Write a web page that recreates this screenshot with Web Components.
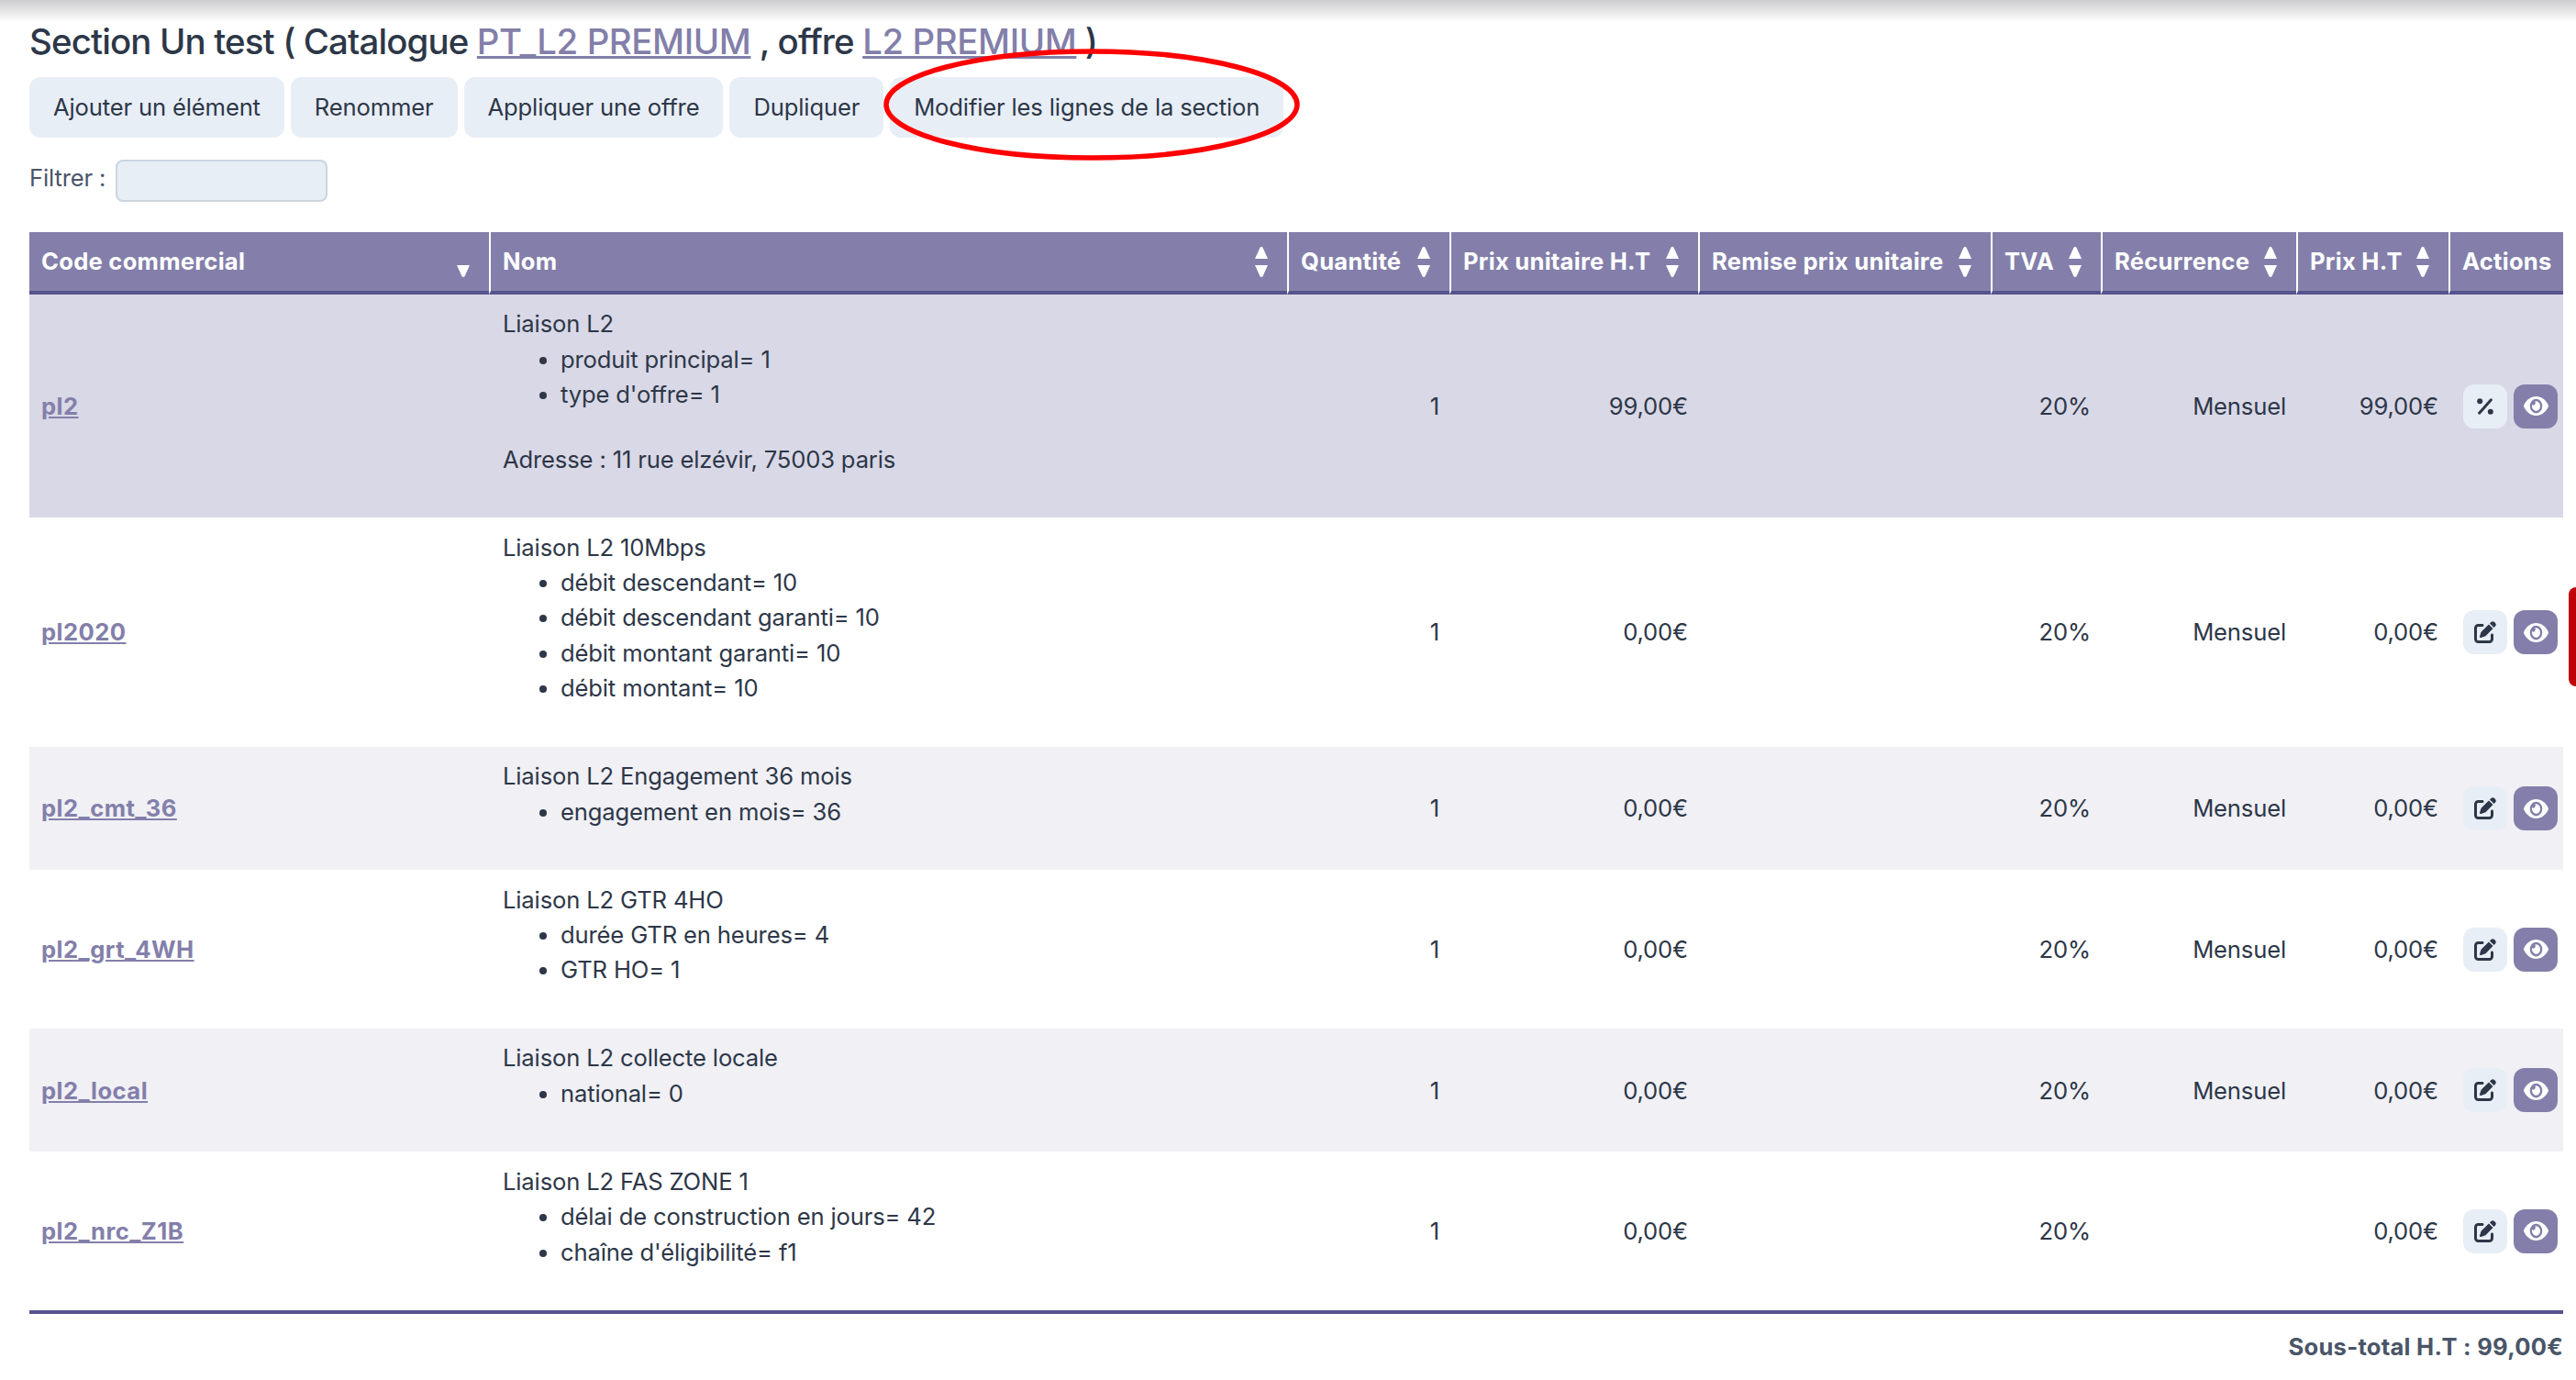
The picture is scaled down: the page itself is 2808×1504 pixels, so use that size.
<!DOCTYPE html>
<html lang="fr">
<head>
<meta charset="utf-8">
<title>Section Un test</title>
<style>
  html, body { margin: 0; background: #fff; }
  body { font-family: Inter, "Liberation Sans", sans-serif; font-size: 25.6px; line-height: 1.5; color: #2d3748; }
</style>
</head>
<body>
<section-page>
  <section-title>Section Un test ( Catalogue <a slot="catalog">PT_L2 PREMIUM</a><a slot="offer">L2 PREMIUM</a></section-title>
  <section-toolbar>
    <tool-button>Ajouter un élément</tool-button>
    <tool-button>Renommer</tool-button>
    <tool-button>Appliquer une offre</tool-button>
    <tool-button>Dupliquer</tool-button>
    <tool-button>Modifier les lignes de la section</tool-button>
  </section-toolbar>
  <filter-field>Filtrer :</filter-field>
  <lines-table></lines-table>
  <sub-total>Sous-total H.T : 99,00€</sub-total>
</section-page>
<side-tab></side-tab>

<script>
const ICONS = {
  eye: `<svg viewBox="0 64 576 384" width="27" height="21" preserveAspectRatio="none"><path fill="currentColor" d="M572.52 241.4C518.29 135.59 410.93 64 288 64S57.68 135.64 3.48 241.41a32.35 32.35 0 0 0 0 29.19C57.71 376.41 165.07 448 288 448s230.32-71.64 284.52-177.41a32.35 32.35 0 0 0 0-29.19zM288 400a144 144 0 1 1 144-144 143.93 143.93 0 0 1-144 144zm0-240a95.31 95.31 0 0 0-25.31 3.79 47.85 47.85 0 0 1-66.9 66.9A95.78 95.78 0 1 0 288 160z"/></svg>`,
  edit: `<svg viewBox="0 0 512 512" width="24" height="24"><path fill="currentColor" d="M471.6 21.7c-21.9-21.9-57.3-21.9-79.2 0L362.3 51.7l97.9 97.9 30.1-30.1c21.9-21.9 21.9-57.3 0-79.2L471.6 21.7zm-299.2 220c-6.1 6.1-10.8 13.6-13.5 21.9l-29.6 88.8c-2.9 8.6-.6 18.1 5.8 24.6s15.9 8.7 24.6 5.8l88.8-29.6c8.2-2.7 15.7-7.4 21.9-13.5L437.7 172.3 339.7 74.3 172.4 241.7zM96 64C43 64 0 107 0 160V416c0 53 43 96 96 96H352c53 0 96-43 96-96V320c0-17.7-14.3-32-32-32s-32 14.3-32 32v96c0 17.7-14.3 32-32 32H96c-17.7 0-32-14.3-32-32V160c0-17.7 14.3-32 32-32h96c17.7 0 32-14.3 32-32s-14.3-32-32-32H96z"/></svg>`,
  percent: `<svg viewBox="0 0 20 20" width="20" height="20"><path d="M16.4 2.8 3.6 17.2" stroke="currentColor" stroke-width="3" stroke-linecap="round"/><circle cx="4.2" cy="4.2" r="3" fill="currentColor"/><circle cx="15.8" cy="15.8" r="3" fill="currentColor"/></svg>`,
  sort: `<svg viewBox="0 0 14 33" width="14" height="33"><path fill="var(--up, #fff)" d="M7 0c.8 0 1.4.5 1.7 1.2L14 13H0L5.3 1.2C5.6.5 6.2 0 7 0z"/><path fill="var(--down, #fff)" d="M0 20h14L8.7 31.8c-.3.7-.9 1.2-1.7 1.2s-1.4-.5-1.7-1.2z"/></svg>`
};

class SectionPage extends HTMLElement {
  constructor() {
    super();
    this.attachShadow({ mode: "open" }).innerHTML = `
      <style>
        :host { display: block; position: relative; height: 1504px; box-sizing: border-box; padding: 0 14px 0 32px; overflow: hidden; }
        .shade { position: absolute; left: 0; right: 0; top: 0; height: 24px; background: linear-gradient(#cdcdd0, #fff); }
        .content { position: relative; display: flex; flex-direction: column; }
        svg { position: absolute; left: 961px; top: 50px; pointer-events: none; }
      </style>
      <div class="shade"></div>
      <div class="content"><slot></slot></div>
      <svg width="460" height="128" viewBox="0 0 460 128">
        <ellipse cx="229" cy="64" rx="224" ry="58" fill="none" stroke="#f00" stroke-width="5.5"/>
      </svg>`;
  }
}

class SectionTitle extends HTMLElement {
  constructor() {
    super();
    this.attachShadow({ mode: "open" }).innerHTML = `
      <style>
        :host { display: block; padding-top: 18px; height: 66px; box-sizing: border-box; font-size: 38.4px; line-height: 54px; font-weight: 500; letter-spacing: -.85px; color: #2d3748; white-space: nowrap; }
        ::slotted(a) { color: #837faa; letter-spacing: -.4px; text-decoration: underline; }
      </style><slot></slot><slot name="catalog"></slot> , offre <slot name="offer"></slot> )`;
  }
}

class SectionToolbar extends HTMLElement {
  constructor() {
    super();
    this.attachShadow({ mode: "open" }).innerHTML = `
      <style>:host { display: flex; gap: 7px; margin-top: 18px; }</style><slot></slot>`;
  }
}

class ToolButton extends HTMLElement {
  constructor() {
    super();
    this.attachShadow({ mode: "open" }).innerHTML = `
      <style>
        :host { display: block; background: #e8eef6; border-radius: 12px; padding: 14px 26px 13.6px; font-size: 25.6px; letter-spacing: -.15px; line-height: 38.4px; color: #2d3748; white-space: nowrap; }
      </style><slot></slot>`;
  }
}

class FilterField extends HTMLElement {
  constructor() {
    super();
    this.attachShadow({ mode: "open" }).innerHTML = `
      <style>
        :host { display: flex; align-items: center; gap: 10.5px; margin-top: 24px; height: 46px; color: #4a5568; font-size: 25.6px; letter-spacing: -.15px; }
        span { padding-bottom: 5px; }
        input { width: 231px; height: 46px; box-sizing: border-box; background: #e8eef6; border: 2px solid #cbd5e0; border-radius: 8px; padding: 0; }
      </style><span><slot></slot></span><input type="text">`;
  }
}

class SortHead extends HTMLElement {
  constructor() {
    super();
    this.attachShadow({ mode: "open" }).innerHTML = `
      <style>
        :host { display: flex; align-items: center; justify-content: space-between; }
        .ico { display: flex; }
        :host([sorted]) .ico { --up: #837faa; }
      </style><span><slot></slot></span><span class="ico">${ICONS.sort}</span>`;
  }
}

class ActionButton extends HTMLElement {
  constructor() {
    super();
    const kind = this.getAttribute("icon");
    this.attachShadow({ mode: "open" }).innerHTML = `
      <style>
        :host { display: flex; align-items: center; justify-content: center; width: 48px; height: 48px; border-radius: 12px; background: #e8eef6; color: #2d3748; }
        :host([primary]) { background: #837faa; color: #fff; }
      </style>${ICONS[kind]}`;
  }
}

const HEADS = [
  ["Code commercial", 501, "sorted"], ["Nom", 870], ["Quantité", 177], ["Prix unitaire H.T", 271],
  ["Remise prix unitaire", 319], ["TVA", 120], ["Récurrence", 213], ["Prix H.T", 166], ["Actions", 125, "plain"]
];

const ROWS = [
  { code: "pl2", name: "Liaison L2", attrs: ["produit principal= 1", "type d'offre= 1"], address: "Adresse : 11 rue elzévir, 75003 paris", price: "99,00€", icon: "percent", tone: "hi" },
  { code: "pl2020", name: "Liaison L2 10Mbps", attrs: ["débit descendant= 10", "débit descendant garanti= 10", "débit montant garanti= 10", "débit montant= 10"], price: "0,00€", icon: "edit" },
  { code: "pl2_cmt_36", name: "Liaison L2 Engagement 36 mois", attrs: ["engagement en mois= 36"], price: "0,00€", icon: "edit", tone: "alt" },
  { code: "pl2_grt_4WH", name: "Liaison L2 GTR 4HO", attrs: ["durée GTR en heures= 4", "GTR HO= 1"], price: "0,00€", icon: "edit" },
  { code: "pl2_local", name: "Liaison L2 collecte locale", attrs: ["national= 0"], price: "0,00€", icon: "edit", tone: "alt" },
  { code: "pl2_nrc_Z1B", name: "Liaison L2 FAS ZONE 1", attrs: ["délai de construction en jours= 42", "chaîne d'éligibilité= f1"], price: "0,00€", icon: "edit", recurrence: "" }
];

class LinesTable extends HTMLElement {
  constructor() {
    super();
    const cols = HEADS.map(h => `<col style="width:${h[1]}px">`).join("");
    const heads = HEADS.map(h => h[2] === "plain"
      ? `<th>${h[0]}</th>`
      : `<th><sort-head ${h[2] || ""}>${h[0]}</sort-head></th>`).join("");
    const rows = ROWS.map(r => `
      <tr class="${r.tone || ""}">
        <td><a>${r.code}</a></td>
        <td class="name">${r.name}<ul>${r.attrs.map(a => `<li>${a}</li>`).join("")}</ul>${r.address ? `<p>${r.address}</p>` : ""}</td>
        <td class="r">1</td>
        <td class="r">${r.price}</td>
        <td></td>
        <td class="r">20%</td>
        <td class="r">${r.recurrence === "" ? "" : "Mensuel"}</td>
        <td class="r">${r.price}</td>
        <td class="acts"><div><action-button icon="${r.icon}"></action-button><action-button icon="eye" primary></action-button></div></td>
      </tr>`).join("");
    this.attachShadow({ mode: "open" }).innerHTML = `
      <style>
        :host { display: block; margin-top: 33px; }
        table { width: 2762px; table-layout: fixed; border-collapse: separate; border-spacing: 0; font-size: 25.6px; line-height: 38.4px; color: #2d3748; }
        th { background: #837faa; color: #fff; font-weight: 700; letter-spacing: .25px; text-align: left; padding: 13.3px 21px 12.3px 13px; height: 38.4px; box-sizing: content-box; border-bottom: 4px solid #55548e; border-left: 2px solid #fff; white-space: nowrap; }
        th:first-child { border-left: 0; }
        th:last-child { padding-right: 0; }
        td { padding: 13.3px 11px 12.3px 13px; vertical-align: middle; letter-spacing: -.15px; }
        td.r { text-align: right; }
        td.name { padding-left: 15px; }
        ul { margin: 0 0 32px; padding: 0 0 0 63px; }
        p { margin: 32px 0 32px; }
        .hi td { background: #d9d8e6; }
        .alt td { background: #f0f0f5; }
        a { color: #837faa; font-weight: 700; letter-spacing: .45px; text-decoration: underline; }
        td.acts { padding: 0 6px 0 0; }
        .acts div { display: flex; justify-content: flex-end; gap: 7px; }
      </style>
      <table><colgroup>${cols}</colgroup><thead><tr>${heads}</tr></thead><tbody>${rows}</tbody></table>`;
  }
}

class SubTotal extends HTMLElement {
  constructor() {
    super();
    this.attachShadow({ mode: "open" }).innerHTML = `
      <style>
        :host { display: block; border-top: 4px solid #55548e; padding-top: 17px; text-align: right; font-size: 25.6px; letter-spacing: .25px; line-height: 38.4px; font-weight: 700; color: #4a5568; }
      </style><slot></slot>`;
  }
}

class SideTab extends HTMLElement {
  constructor() {
    super();
    this.attachShadow({ mode: "open" }).innerHTML = `
      <style>
        :host { position: fixed; right: 0; top: 640px; width: 8px; height: 108px; background: #c00008; border-radius: 8px 0 0 8px; }
      </style>`;
  }
}

customElements.define("section-page", SectionPage);
customElements.define("section-title", SectionTitle);
customElements.define("section-toolbar", SectionToolbar);
customElements.define("tool-button", ToolButton);
customElements.define("filter-field", FilterField);
customElements.define("sort-head", SortHead);
customElements.define("action-button", ActionButton);
customElements.define("lines-table", LinesTable);
customElements.define("sub-total", SubTotal);
customElements.define("side-tab", SideTab);
</script>
</body>
</html>
